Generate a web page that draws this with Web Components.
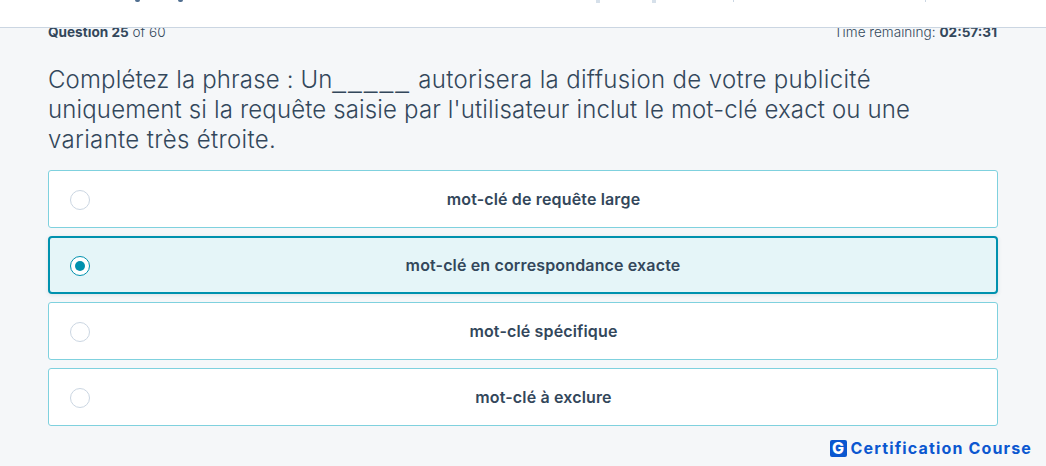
<!DOCTYPE html>
<html lang="fr">
<head>
<meta charset="utf-8">
<title>Question 25</title>
<style>
  html, body { margin: 0; height: 100%; overflow: hidden; }
  body {
    background: #f5f7f9;
    color: #33475b;
    font-family: "Inter", "Liberation Sans", sans-serif;
  }
  .blank { font-family: "Liberation Sans", sans-serif; letter-spacing: 2.4px; }
  .wide { letter-spacing: .33px; }
</style>
</head>
<body>
<quiz-header></quiz-header>
<quiz-main>
  <quiz-status current="25" total="60" remaining="02:57:31"></quiz-status>
  <quiz-question>Complétez la phrase : Un<span class="blank">_____</span> <span class="wide">autorisera la diffusion de votre publicité</span> uniquement si la requête saisie par l'utilisateur inclut le mot-clé exact ou une <span class="wide">variante très étroite.</span></quiz-question>
  <quiz-options>
    <quiz-option>mot-clé de requête large</quiz-option>
    <quiz-option selected>mot-clé en correspondance exacte</quiz-option>
    <quiz-option>mot-clé spécifique</quiz-option>
    <quiz-option>mot-clé à exclure</quiz-option>
  </quiz-options>
</quiz-main>
<quiz-brand>Certification Course</quiz-brand>

<script>
class QuizHeader extends HTMLElement {
  constructor() {
    super();
    this.attachShadow({mode: 'open'}).innerHTML = `
      <style>
        :host {
          display: block;
          position: relative;
          z-index: 2;
          height: 27px;
          background: #fff;
          border-bottom: 1px solid #cbd6e2;
        }
        .marks { display: flex; height: 4px; align-items: flex-start; }
        .marks i { display: block; flex: none; }
        .desc { width: 5px; height: 2px; background: #516f90; border-radius: 0 0 3px 3px; }
        .tab { width: 4px; height: 3px; background: #d6e0ea; }
        .line { width: 1px; height: 2px; background: #cbd6e2; }
      </style>
      <div class="marks">
        <i class="desc" style="margin-left:135px"></i>
        <i class="desc" style="margin-left:38px"></i>
        <i class="tab" style="margin-left:413px"></i>
        <i class="tab" style="margin-left:52px"></i>
        <i class="line" style="margin-left:77px"></i>
        <i class="line" style="margin-left:191px"></i>
      </div>
    `;
  }
}

class QuizMain extends HTMLElement {
  constructor() {
    super();
    this.attachShadow({mode: 'open'}).innerHTML = `
      <style>
        :host { display: block; padding: 0 48px 0 48px; }
      </style>
      <slot></slot>
    `;
  }
}

class QuizStatus extends HTMLElement {
  constructor() {
    super();
    this.attachShadow({mode: 'open'});
  }

  connectedCallback() {
    this.shadowRoot.innerHTML = `
      <style>
        :host {
          display: flex;
          justify-content: space-between;
          margin-top: -6px;
          padding-right: 1px;
          height: 20px;
          font-size: 13.6px;
          line-height: 20px;
          font-weight: 300;
        }
        b { font-weight: 700; }
      </style>
      <span><b>Question ${this.getAttribute('current')}</b> of ${this.getAttribute('total')}</span>
      <span>Time remaining: <b>${this.getAttribute('remaining')}</b></span>
    `;
  }
}

class QuizQuestion extends HTMLElement {
  constructor() {
    super();
    this.attachShadow({mode: 'open'}).innerHTML = `
      <style>
        :host {
          display: block;
          margin-top: 23px;
          font-size: 24px;
          line-height: 30px;
          font-weight: 300;
          letter-spacing: .14px;
          max-width: 880px;
        }
      </style>
      <slot></slot>
    `;
  }
}

class QuizOptions extends HTMLElement {
  constructor() {
    super();
    this.attachShadow({mode: 'open'}).innerHTML = `
      <style>
        :host { display: flex; flex-direction: column; gap: 8px; margin-top: 15px; }
      </style>
      <slot></slot>
    `;
  }
}

class QuizOption extends HTMLElement {
  constructor() {
    super();
    this.attachShadow({mode: 'open'}).innerHTML = `
      <style>
        :host {
          display: flex;
          align-items: center;
          box-sizing: border-box;
          height: 58px;
          padding: 0 0 0 21px;
          background: #fff;
          border: 1px solid #7fd1de;
          border-radius: 3px;
          font-size: 16px;
          font-weight: 600;
          letter-spacing: .15px;
        }
        :host([selected]) {
          background: #e5f5f8;
          border: 2px solid #0091ae;
          border-radius: 4px;
          padding: 0 0 0 20px;
          box-shadow: 0 1px 4px rgba(45, 62, 80, .12);
        }
        .radio {
          flex: none;
          box-sizing: border-box;
          width: 20px;
          height: 20px;
          margin-top: 2px;
          border: 1px solid #cbd6e2;
          border-radius: 50%;
          background: #fff;
          display: flex;
          align-items: center;
          justify-content: center;
        }
        :host([selected]) .radio { border-color: #0091ae; }
        :host([selected]) .radio::after {
          content: "";
          width: 10px;
          height: 10px;
          border-radius: 50%;
          background: #0091ae;
        }
        .label { flex: 1; text-align: center; }
      </style>
      <span class="radio"></span>
      <span class="label"><slot></slot></span>
    `;
  }
}

class QuizBrand extends HTMLElement {
  constructor() {
    super();
    this.attachShadow({mode: 'open'}).innerHTML = `
      <style>
        :host {
          display: flex;
          align-items: center;
          justify-content: flex-end;
          gap: 4px;
          margin-top: 13px;
          padding-right: 14px;
          height: 18px;
          color: #0b57d0;
          font-family: "Inter", "Liberation Sans", sans-serif;
          font-size: 16px;
          font-weight: 700;
          letter-spacing: 1.15px;
        }
        .logo {
          width: 17px;
          height: 17px;
          border-radius: 2px;
          background: #0b57d0;
          color: #fff;
          font-size: 16px;
          line-height: 17px;
          font-weight: 800;
          text-align: center;
          letter-spacing: 0;
        }
      </style>
      <span class="logo">G</span><slot></slot>
    `;
  }
}

customElements.define('quiz-header', QuizHeader);
customElements.define('quiz-main', QuizMain);
customElements.define('quiz-status', QuizStatus);
customElements.define('quiz-question', QuizQuestion);
customElements.define('quiz-options', QuizOptions);
customElements.define('quiz-option', QuizOption);
customElements.define('quiz-brand', QuizBrand);
</script>
</body>
</html>
